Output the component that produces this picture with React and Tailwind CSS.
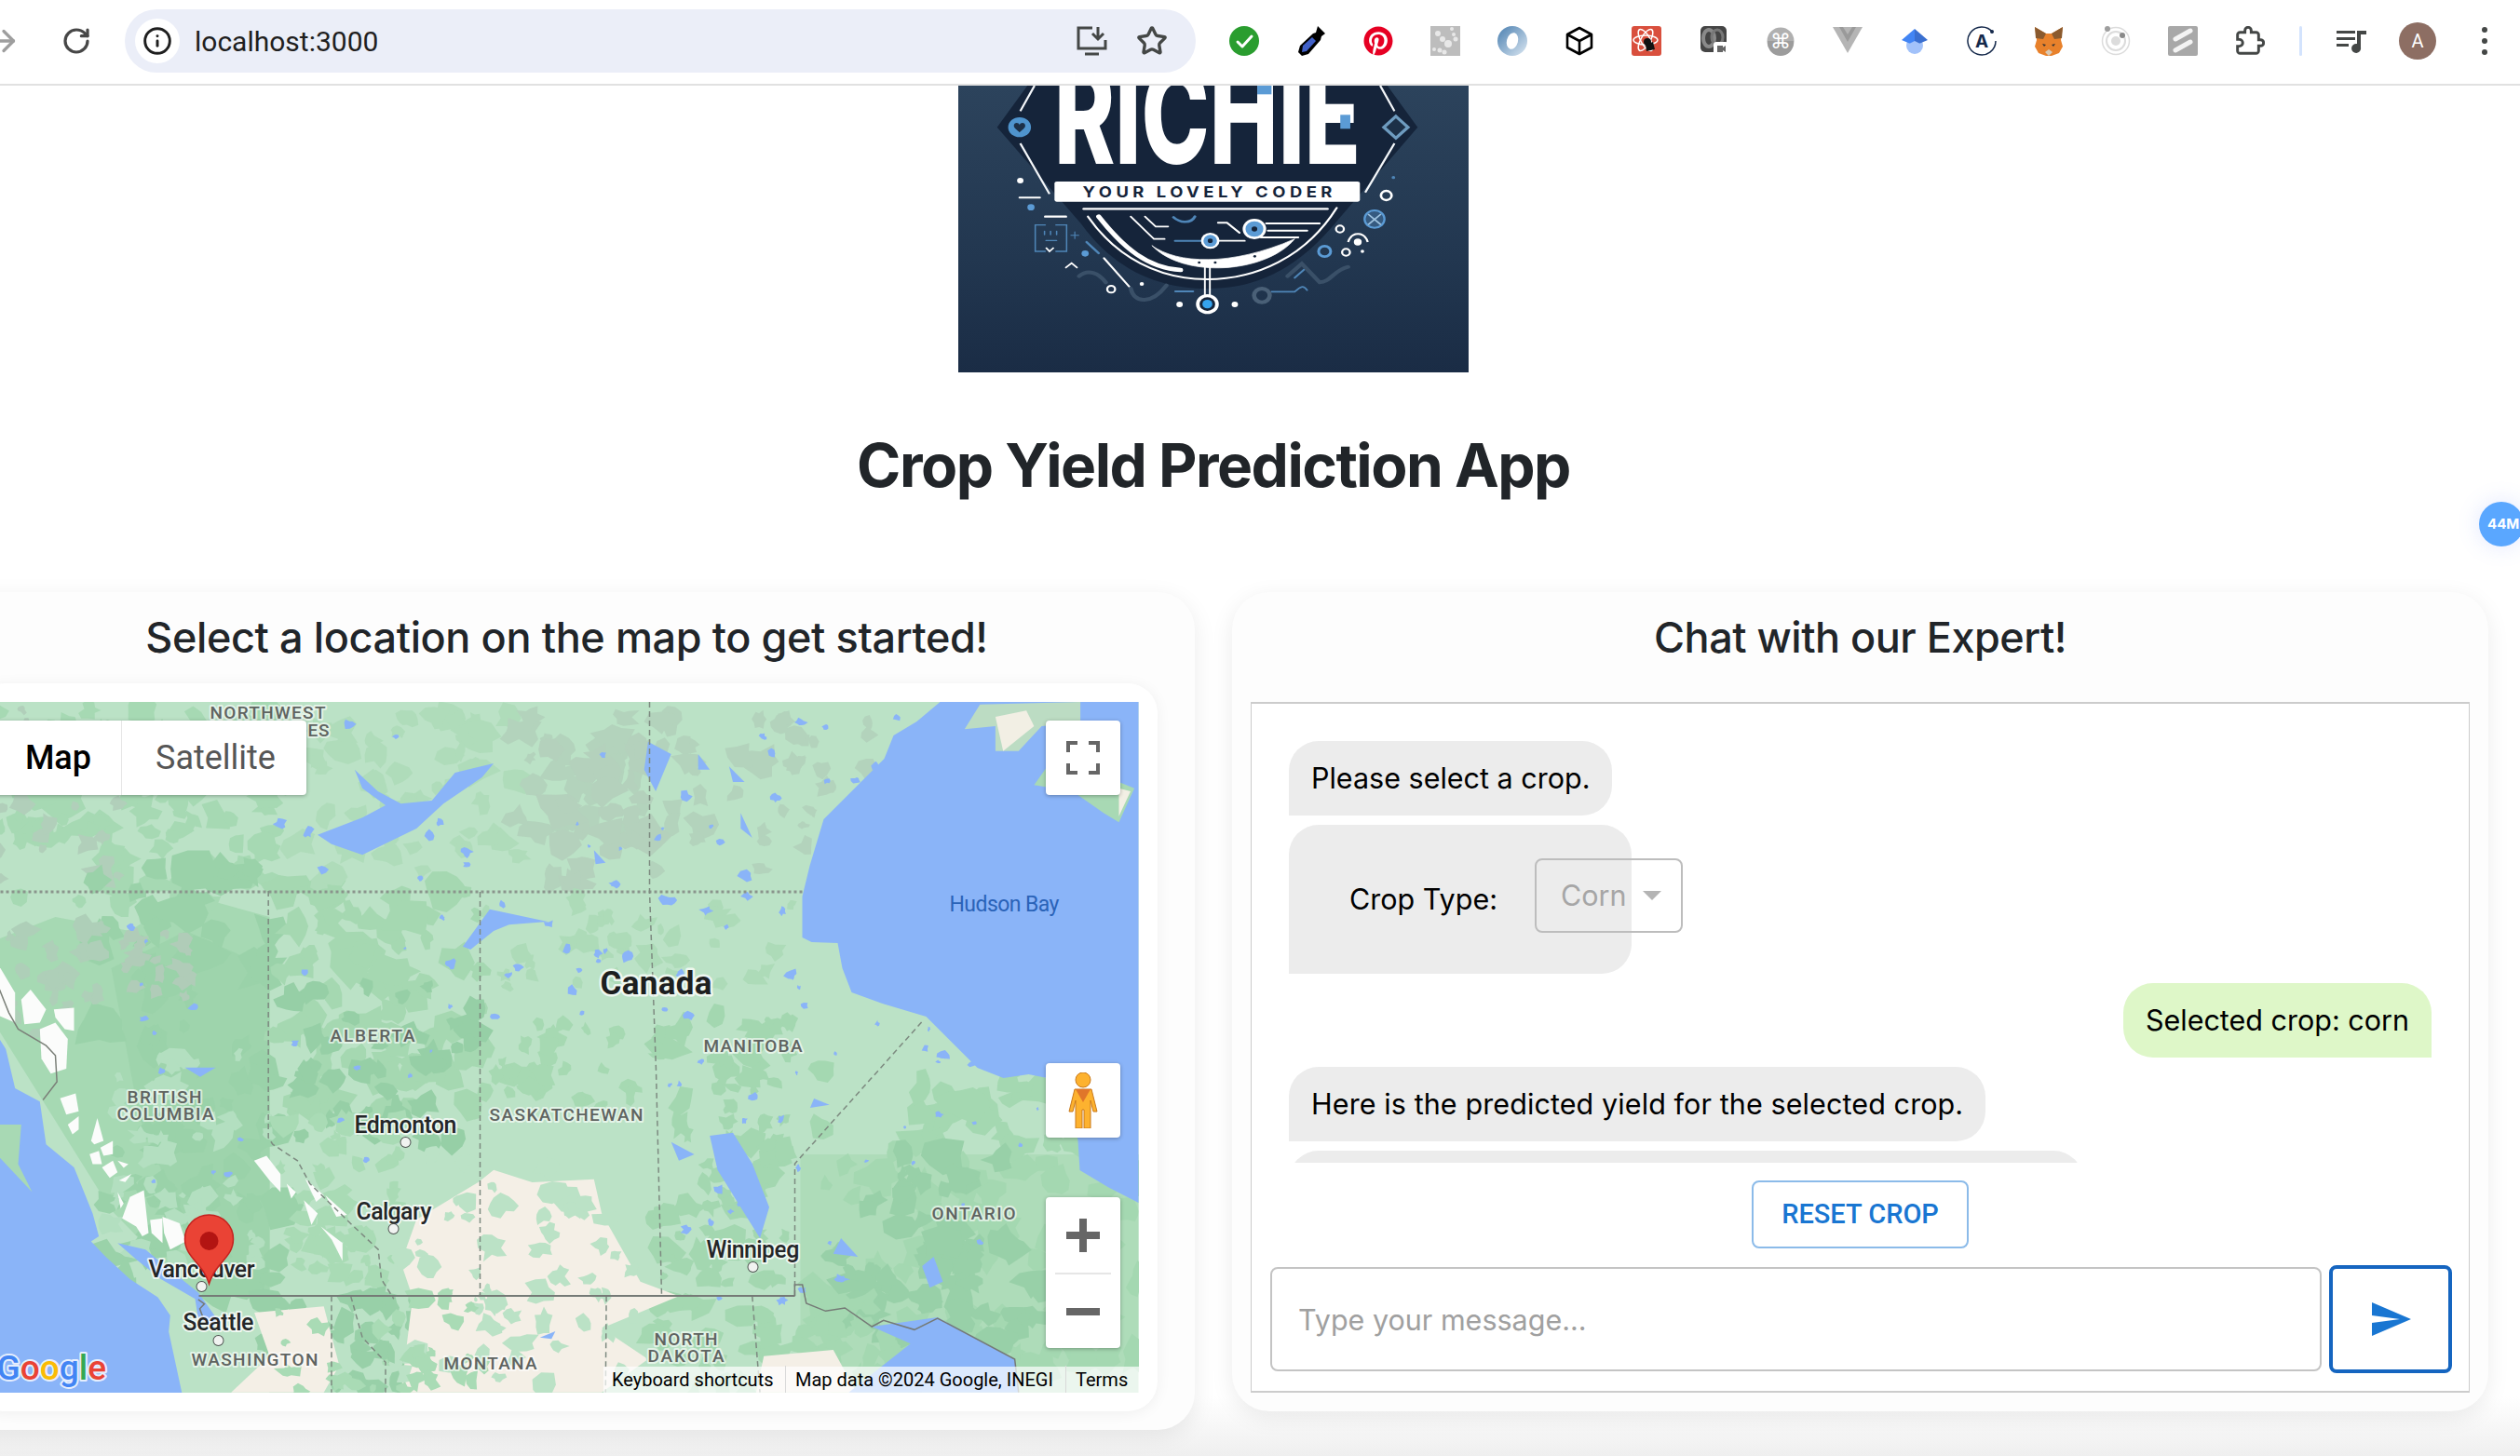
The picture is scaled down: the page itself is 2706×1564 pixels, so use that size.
import { ArrowRight, Info, RotateCw, Star } from "lucide-react";
import { FaPinterest } from "react-icons/fa";

// ── map helpers ─────────────────────────────────────────────
// coordinates below are page pixels, the map svg viewBox starts at the same origin
const toD = (pts) => "M" + pts.map((p) => p.map((n) => n.toFixed(1)).join(" ")).join("L") + "Z";
const z4 = (pts) => pts.map(([x, y]) => [x * 0.829, 630 + y / 3]);
const z5 = (pts) => pts.map(([x, y]) => [x * 0.829, 1090 + y / 3]);
const z12 = (pts) => pts.map(([x, y]) => [x / 3, 950 + y / 2.83]);

function makeRng(seed) {
  let s = seed;
  return () => {
    s = (s * 16807) % 2147483647;
    return (s - 1) / 2147483646;
  };
}

function blob(rng, cx, cy, r, stretch = 1) {
  const pts = [];
  const n = 7 + Math.floor(rng() * 6);
  for (let i = 0; i < n; i++) {
    const a = (i / n) * Math.PI * 2;
    const rr = r * (0.45 + rng() * 0.75);
    pts.push([cx + Math.cos(a) * rr * stretch, cy + Math.sin(a) * rr]);
  }
  return toD(pts);
}

// [x0, y0, x1, y1, count, minR, maxR, fill, seed]
const scatter = [
  [-5, 760, 300, 980, 90, 6, 22, "#a6d9b3", 11],
  [-5, 760, 130, 950, 30, 5, 16, "#b1cfba", 12],
  [100, 930, 300, 1390, 80, 8, 26, "#9ad2a9", 13],
  [0, 990, 110, 1110, 24, 6, 16, "#aecfb8", 14],
  [130, 1000, 210, 1070, 18, 5, 12, "#b0ccb8", 15],
  [110, 1130, 290, 1370, 50, 5, 16, "#b3dfc0", 16],
  [290, 950, 520, 1200, 70, 8, 24, "#a5d8b1", 17],
  [300, 1050, 510, 1230, 36, 6, 18, "#96cfa6", 18],
  [300, 770, 560, 950, 60, 6, 18, "#afdcba", 19],
  [520, 760, 820, 950, 50, 6, 20, "#b3d3bc", 20],
  [590, 800, 700, 950, 24, 10, 24, "#b4d1bc", 21],
  [810, 770, 950, 950, 26, 5, 14, "#b3d3bc", 22],
  [520, 965, 850, 1060, 40, 5, 14, "#addbb8", 23],
  [520, 1100, 700, 1190, 30, 6, 14, "#a6d9b2", 24],
  [700, 1090, 850, 1380, 80, 6, 18, "#a3d7b0", 25],
  [860, 1140, 1223, 1470, 100, 8, 24, "#a4d8b1", 26],
  [900, 1240, 1120, 1440, 60, 8, 22, "#98d0a8", 27],
  [280, 1390, 470, 1496, 50, 6, 16, "#98d0a8", 28],
  [700, 1392, 1000, 1496, 50, 6, 18, "#a4d8b1", 29],
  [300, 1200, 430, 1392, 50, 5, 16, "#a9dbb5", 31],
];

// drawn over the prairie: green breaks and the little lakes
const overlay = [
  [430, 1240, 700, 1490, 60, 4, 16, "#bbe2c6", 30],
  [440, 1392, 520, 1496, 16, 5, 14, "#a9dbb5", 32],
  [300, 1410, 440, 1496, 14, 4, 12, "#a9dbb5", 33],
  [300, 770, 1000, 1100, 70, 2, 7, "#8ab4f8", 34],
  [700, 1100, 1200, 1400, 36, 2, 6, "#8ab4f8", 35],
  [120, 980, 500, 1300, 20, 1.5, 4, "#8ab4f8", 36],
];

const cream = [
  z5([[640, 500], [690, 540], [770, 530], [780, 640], [830, 860], [880, 907], [780, 1010], [840, 1110], [780, 1217], [520, 1217], [535, 910], [520, 800], [540, 660], [620, 540]]),
  z5([[330, 960], [420, 940], [440, 1130], [420, 1217], [300, 1217], [350, 1100]]),
  z5([[990, 1100], [1080, 1080], [1110, 1217], [980, 1217]]),
];

const water = [
  // hudson bay
  [[1223, 754], [1010, 754], [985, 775], [960, 790], [950, 815], [915, 850], [885, 880], [870, 930], [862, 963], [862, 1007], [872, 1012], [900, 1013], [905, 1040], [915, 1066], [948, 1078], [995, 1092], [1025, 1122], [1050, 1147], [1078, 1158], [1105, 1154], [1135, 1160], [1150, 1188], [1158, 1225], [1160, 1257], [1190, 1275], [1223, 1292]],
  // pacific
  z12([[-20, 440], [20, 500], [50, 620], [130, 660], [150, 790], [240, 860], [300, 1000], [320, 1070], [295, 1085], [340, 1130], [420, 1200], [510, 1255], [550, 1310], [545, 1360], [590, 1557], [-20, 1557]]),
  // georgia strait and puget sound
  z12([[380, 1090], [470, 1110], [560, 1180], [640, 1240], [700, 1320], [690, 1345], [640, 1320], [630, 1260], [520, 1200], [440, 1140]]),
  // great slave
  z4([[460, 590], [490, 660], [520, 700], [560, 690], [590, 600], [640, 570], [625, 615], [575, 700], [540, 780], [470, 865], [430, 830], [412, 800], [470, 745], [500, 705], [470, 650]]),
  // athabasca
  z4([[600, 1160], [635, 1040], [710, 1080], [660, 1090], [640, 1110], [610, 1170]]),
  // winnipeg
  z5([[920, 390], [950, 380], [975, 480], [997, 620], [985, 720], [960, 620], [930, 500]]),
  // superior
  z5([[1130, 1005], [1215, 975], [1315, 1110], [1320, 1217], [1100, 1217], [1180, 1060]]),
  // smaller lakes
  z4([[840, 500], [870, 540], [850, 660], [835, 590]]),
  z4([[905, 540], [920, 590], [905, 590]]),
  z4([[945, 580], [965, 630], [950, 630]]),
  z4([[770, 850], [785, 890], [772, 895]]),
  z4([[960, 730], [975, 810], [960, 780]]),
  z5([[1210, 780], [1222, 860], [1205, 880], [1195, 810]]),
  z5([[1080, 770], [1112, 780], [1090, 720]]),
  z5([[700, 1040], [720, 1020], [715, 1045]]),
  z5([[1055, 270], [1075, 290], [1050, 300]]),
  z5([[870, 410], [900, 450], [880, 470]]),
  z5([[240, 170], [280, 170], [260, 200]]),
  z4([[1340, 620], [1350, 640], [1338, 650]]),
];

const islands = [
  z4([[1250, 460], [1270, 380], [1400, 372], [1400, 440], [1350, 450], [1320, 530], [1290, 530], [1290, 450]]),
  z4([[1340, 640], [1360, 570], [1420, 600], [1470, 650], [1450, 760], [1430, 730], [1390, 660]]),
  z12([[0, 730], [70, 730], [60, 850], [105, 935], [50, 880], [0, 830]]),
];

const snow = [
  z12([[0, 250], [50, 330], [50, 420], [0, 400]]),
  z12([[70, 350], [100, 320], [150, 380], [130, 420], [80, 425]]),
  z12([[130, 440], [180, 420], [220, 470], [215, 560], [165, 575], [135, 530]]),
  z12([[175, 380], [240, 375], [240, 445], [210, 440], [180, 405]]),
  z12([[195, 650], [245, 635], [255, 690], [215, 700]]),
  z12([[220, 730], [255, 705], [255, 745], [235, 760]]),
  z12([[295, 780], [315, 710], [335, 780], [305, 790]]),
  z12([[325, 800], [365, 780], [365, 820], [335, 825]]),
  z12([[290, 820], [320, 810], [330, 850], [300, 850]]),
  z12([[330, 860], [365, 840], [380, 875], [355, 892]]),
  z12([[380, 840], [415, 850], [400, 862]]),
  z12([[385, 900], [425, 880], [405, 905]]),
  z12([[380, 935], [400, 970], [390, 985]]),
  z12([[420, 950], [465, 930], [480, 1060], [460, 1070], [440, 1040], [395, 1015]]),
  z12([[485, 1020], [525, 1015], [525, 1090], [490, 1060]]),
  z12([[525, 1010], [580, 1030], [600, 1085], [550, 1110], [530, 1060]]),
  z12([[820, 840], [860, 825], [905, 880], [905, 935], [870, 900]]),
  z12([[925, 910], [955, 935], [940, 955]]),
  z12([[980, 960], [1025, 1000], [1005, 1035]]),
  z12([[985, 895], [1045, 945], [1020, 965]]),
  z12([[1050, 945], [1120, 1005], [1085, 1010]]),
  z12([[1035, 1040], [1105, 1090], [1105, 1145], [1070, 1080]]),
];

const dashed = [
  z12([[866, 20], [866, 770], [880, 790], [960, 840], [1000, 910], [1130, 1030], [1220, 1110], [1230, 1200], [1270, 1260]]),
  [[516, 958], [516, 1392]],
  [[698, 754], [698, 958], [705, 1150], [711, 1392]],
  [[854, 1392], [854, 1250], [991, 1097]],
  z5([[430, 907], [430, 1217]]),
  z5([[455, 907], [470, 1040], [500, 1120], [500, 1217]]),
  z5([[786, 907], [785, 1217]]),
  z5([[975, 907], [985, 1217]]),
];

const places = [
  ["NORTHWEST", 226, 350, 765],
  ["ES", 331, 354, 784],
  ["ALBERTA", 355, 446, 1112],
  ["MANITOBA", 756, 862, 1123],
  ["BRITISH", 137, 217, 1178],
  ["COLUMBIA", 126, 230, 1196],
  ["SASKATCHEWAN", 526, 691, 1197],
  ["ONTARIO", 1001, 1091, 1303],
  ["WASHINGTON", 206, 342, 1460],
  ["MONTANA", 477, 577, 1464],
  ["NORTH", 703, 771, 1438],
  ["DAKOTA", 696, 778, 1456],
];

const cities = [
  ["Edmonton", 381, 491, 1208, 436, 1227],
  ["Calgary", 383, 464, 1301, 423, 1320],
  ["Winnipeg", 759, 859, 1342, 809, 1361],
  ["Vancouver", 160, 274, 1363, 217, 1382],
  ["Seattle", 197, 273, 1420, 235, 1440],
];

function scatterPaths(list) {
  return list.flatMap(([x0, y0, x1, y1, count, rMin, rMax, fill, seed]) => {
    const rng = makeRng(seed * 7919);
    return Array.from({ length: count }, (_, i) => (
      <path
        key={`${seed}-${i}`}
        d={blob(rng, x0 + rng() * (x1 - x0), y0 + rng() * (y1 - y0), rMin + rng() * (rMax - rMin), 0.7 + rng() * 0.8)}
        fill={fill}
      />
    ));
  });
}

function MapCanvas() {
  return (
    <svg viewBox="-5 754 1228 742" className="block h-full w-full">
      <rect x="-5" y="754" width="1228" height="742" fill="#bbe2c6" />
      <path d="M-5 1010L60 985L140 1000L200 960L290 985V1392H210L120 1300L-5 1100Z" fill="#a6d9b3" />
      <path d="M120 1040L200 1000L290 1040V1392H230L150 1200Z" fill="#9ed4ac" />
      <path d="M860 1240H1223V1470H860Z" fill="#aedcb9" />
      {scatterPaths(scatter)}
      {cream.map((p, i) => (
        <path key={i} d={toD(p)} fill="#f4efe6" />
      ))}
      {scatterPaths(overlay)}
      {water.map((p, i) => (
        <path key={i} d={toD(p)} fill="#8ab4f8" />
      ))}
      {islands.map((p, i) => (
        <path key={i} d={toD(p)} fill={i === 0 ? "#bcdcc3" : "#a8d9b4"} />
      ))}
      <path d={toD(z4([[1290, 420], [1330, 400], [1340, 450], [1300, 530]]))} fill="#f2efe4" />
      <path d={toD(z4([[1450, 650], [1465, 660], [1450, 740]]))} fill="#f2efe4" />
      {snow.map((p, i) => (
        <path key={i} d={toD(p)} fill="#fbfcfb" />
      ))}

      {/* borders */}
      <path d="M-5 958H862" stroke="#8a948c" strokeWidth="3" strokeDasharray="3 3" fill="none" />
      {dashed.map((p, i) => (
        <polyline key={i} points={p.map((q) => q.join(",")).join(" ")} fill="none" stroke="#7d8a80" strokeWidth="1.5" strokeDasharray="6 4" />
      ))}
      <polyline
        points={z12([[0, 320], [30, 390], [60, 440], [150, 490], [180, 520], [185, 600], [140, 655]]).map((q) => q.join(",")).join(" ")}
        fill="none"
        stroke="#7b8079"
        strokeWidth="1.5"
      />
      <path d="M214 1392H854" stroke="#757a76" strokeWidth="2" fill="none" />
      <polyline
        points={z5([[1030, 907], [1030, 870], [1040, 870], [1045, 930], [1070, 955], [1095, 945], [1130, 1005], [1145, 985], [1185, 1015], [1215, 978], [1315, 1110], [1320, 1217]]).map((q) => q.join(",")).join(" ")}
        fill="none"
        stroke="#757a76"
        strokeWidth="1.5"
      />
      <polyline points={z12([[640, 1262], [660, 1275], [645, 1290], [655, 1315]]).map((q) => q.join(",")).join(" ")} fill="none" stroke="#757a76" strokeWidth="1.5" />

      {/* labels */}
      <g style={{ fontFamily: "Roboto, sans-serif" }} textAnchor="start" paintOrder="stroke" strokeLinejoin="round">
        {places.map(([name, x0, x1, y]) => (
          <text key={name + x0} x={x0} y={y + 7} fontSize="19" fontWeight="500" fill="#5f6461" stroke="#ffffff" strokeOpacity="0.6" strokeWidth="4" textLength={x1 - x0} lengthAdjust="spacing">
            {name}
          </text>
        ))}
        <text x="1020" y="979" fontSize="23" fill="#2a63b8" textLength="118">Hudson Bay</text>
        <text x="645" y="1068" fontSize="35" fontWeight="700" fill="#1d1f20" stroke="#ffffff" strokeOpacity="0.75" strokeWidth="5" textLength="120">Canada</text>
        {cities.map(([name, x0, x1, y, dx, dy]) => (
          <g key={name}>
            <text x={x0} y={y + 9} fontSize="25" fontWeight="500" fill="#242628" stroke="#ffffff" strokeOpacity="0.75" strokeWidth="4" textLength={x1 - x0}>
              {name}
            </text>
            <circle cx={dx} cy={dy} r="5" fill="#f1f3f1" stroke="#4e5250" strokeWidth="2" />
          </g>
        ))}
        <text x="-3" y="1482" fontSize="37" fontWeight="500" stroke="#ffffff" strokeOpacity="0.8" strokeWidth="4" style={{ fontFamily: "Roboto, sans-serif" }}>
          <tspan fill="#4285f4">G</tspan>
          <tspan fill="#ea4335">o</tspan>
          <tspan fill="#fbbc05">o</tspan>
          <tspan fill="#4285f4">g</tspan>
          <tspan fill="#34a853">l</tspan>
          <tspan fill="#ea4335">e</tspan>
        </text>
      </g>

      {/* pin */}
      <path d="M225 1305c-14.500 0-26 11.500-26 26 0 20 20 26 26 48 6-22 26-28 26-48 0-14.500-11.500-26-26-26z" fill="#ea4335" stroke="#c5221f" strokeWidth="1.500" />
      <ellipse cx="225" cy="1333" rx="10" ry="10" fill="#b31412" />
    </svg>
  );
}

function MapControls() {
  return (
    <>
      <div className="absolute left-0 top-5 flex h-20 w-[335px] rounded-r bg-white text-[36px] shadow-[0_1px_4px_rgba(0,0,0,0.3)] [font-family:Roboto,sans-serif]">
        <div className="flex w-[137px] items-center justify-end border-r border-[#e6e6e6] pr-[32px] font-medium text-black">Map</div>
        <div className="flex flex-1 items-center pl-9 text-[#565656]">Satellite</div>
      </div>

      <div className="absolute right-5 top-5 flex h-20 w-20 items-center justify-center rounded bg-white shadow-[0_1px_4px_rgba(0,0,0,0.3)]">
        <svg width="36" height="36" viewBox="0 0 36 36" fill="none" stroke="#666666" strokeWidth="4">
          <path d="M2 12V2H12M24 2H34V12M34 24V34H24M12 34H2V24" />
        </svg>
      </div>

      <div className="absolute right-5 top-[388px] flex h-20 w-20 items-center justify-center rounded bg-white shadow-[0_1px_4px_rgba(0,0,0,0.3)]">
        <svg width="36" height="60" viewBox="0 0 36 60">
          <circle cx="18" cy="8" r="8" fill="#fdb22f" stroke="#c9791b" strokeWidth="1" />
          <path d="M9 18H27L33 42H29L26 30V60H19V40H17V60H10V30L7 42H3Z" fill="#fdb22f" stroke="#c9791b" strokeWidth="1" />
          <path d="M10 18H26L18 32Z" fill="#e0762a" />
        </svg>
      </div>

      <div className="absolute right-5 top-[532px] flex h-[162px] w-20 flex-col items-center rounded bg-white shadow-[0_1px_4px_rgba(0,0,0,0.3)]">
        <div className="flex h-[81px] w-full items-center justify-center">
          <svg width="36" height="36" viewBox="0 0 36 36" fill="#666666">
            <path d="M14 0H22V14H36V22H22V36H14V22H0V14H14Z" />
          </svg>
        </div>
        <div className="h-0.5 w-[60px] bg-[#e6e6e6]" />
        <div className="flex flex-1 items-center justify-center">
          <div className="h-2 w-9 bg-[#666666]" />
        </div>
      </div>

      <div className="absolute bottom-0 right-0 flex h-7 w-[575px] items-center bg-white/70 text-[20px] text-black [font-family:Roboto,sans-serif]">
        <span className="w-[195px] shrink-0 pl-[9px]">Keyboard shortcuts</span>
        <span className="w-[301px] shrink-0 border-l border-[#d9d9d9] pl-[10px]">Map data ©2024 Google, INEGI</span>
        <span className="border-l border-[#d9d9d9] pl-[10px]">Terms</span>
      </div>
    </>
  );
}

// ── logo ────────────────────────────────────────────────────
function Logo() {
  return (
    <div className="mx-auto h-[308px] w-[548px] shrink-0 overflow-hidden">
      <svg viewBox="76 36 1432 924" preserveAspectRatio="none" className="block h-full w-full">
        <defs>
          <linearGradient id="logoBg" x1="0" y1="0" x2="0" y2="1">
            <stop offset="0" stopColor="#2c435c" />
            <stop offset="0.6" stopColor="#223750" />
            <stop offset="1" stopColor="#1a2c45" />
          </linearGradient>
        </defs>
        <rect x="76" y="36" width="1432" height="924" fill="url(#logoBg)" />
        <path d="M270 36H1280L1365 170L1140 470C1020 640 900 690 775 690C650 690 520 640 420 480L185 170Z" fill="#15243a" />
        <circle cx="248" cy="170" r="32" fill="#4f94cd" />
        <path d="M232 165c0-12 14-12 16-2 2-10 16-10 16 2 0 8-10 14-16 22-6-8-16-14-16-22z" fill="#1c3047" />
        <path d="M1304 135L1338 170L1304 205L1270 170Z" fill="#1c3047" stroke="#6e9cc0" strokeWidth="9" />
        <path d="M290 36L250 118M250 222L332 385M1260 36L1300 118M1300 222L1218 380" stroke="#f4f7fa" strokeWidth="6" fill="none" />

        <text x="345" y="288" fontSize="440" fontWeight="800" fill="#ffffff" textLength="860" lengthAdjust="spacingAndGlyphs" style={{ fontFamily: "Inter, sans-serif" }}>
          RICHIE
        </text>
        <rect x="915" y="36" width="40" height="28" fill="#5b9bd5" />
        <rect x="1148" y="130" width="28" height="45" fill="#5b9bd5" />

        <rect x="346" y="345" width="857" height="65" rx="7" fill="#ffffff" />
        <text x="425" y="397" fontSize="48" fontWeight="700" fill="#15243a" textLength="700" lengthAdjust="spacing" style={{ fontFamily: "Inter, sans-serif" }}>
          YOUR LOVELY  CODER
        </text>

        <g fill="none" stroke="#ffffff" strokeLinecap="round">
          <path d="M428 433H1112" strokeWidth="7" />
          <path d="M440 458C520 590 640 660 775 660C910 660 1050 590 1138 430" strokeWidth="6" />
          <path d="M470 458C540 560 610 625 700 630" strokeWidth="14" />
          <path d="M620 552C690 610 840 620 1020 530C940 640 710 660 620 552Z" fill="#ffffff" strokeWidth="2" />
          <path d="M560 458L625 530H655M600 458L630 490H665" strokeWidth="5" />
          <path d="M805 478H830L865 510M940 480H1090M945 503H1055M925 525H1030" strokeWidth="6" />
          <path d="M800 536H880" strokeWidth="5" />
          <path d="M768 600V710M782 600V710" strokeWidth="5" />
          <path d="M485 592L556 684" strokeWidth="6" />
          <path d="M248 397H305" strokeWidth="6" />
          <path d="M320 458H378" strokeWidth="7" />
          <path d="M378 622L394 608L409 622" strokeWidth="5" />
        </g>
        <g fill="none" stroke="#4f86b8" strokeLinecap="round">
          <path d="M684 536H760" strokeWidth="6" />
          <path d="M685 699H735" strokeWidth="6" />
          <path d="M436 540L470 576" strokeWidth="7" />
          <path d="M955 700H1020C1040 680 1045 680 1055 695" strokeWidth="5" />
          <path d="M1020 655L1050 625L1090 668" strokeWidth="6" />
          <path d="M680 460C700 480 730 480 740 458" strokeWidth="8" />
          <path d="M320 485H292V570H320M350 570H380V485H350" strokeWidth="4" />
          <path d="M392 518H414M403 507V529" strokeWidth="3" />
          <path d="M318 505V516M335 505V516M352 505V516M322 535H352" strokeWidth="4" />
        </g>
        <path d="M322 558L332 570L344 558" stroke="#ffffff" strokeWidth="5" fill="none" />
        <path d="M415 650C440 625 470 640 490 670M560 690C570 740 620 740 660 680M1000 650L1040 610L1090 670C1120 670 1130 630 1170 620" stroke="#3a5068" strokeWidth="12" fill="none" strokeLinecap="round" />
        <g>
          <circle cx="783" cy="536" r="26" fill="#ffffff" />
          <circle cx="783" cy="536" r="19" fill="#5b9bd5" />
          <circle cx="783" cy="536" r="7" fill="#15243a" />
          <circle cx="907" cy="498" r="33" fill="#ffffff" />
          <circle cx="907" cy="498" r="25" fill="#5b9bd5" />
          <circle cx="907" cy="498" r="8" fill="#15243a" />
          <circle cx="775" cy="740" r="32" fill="#ffffff" />
          <circle cx="775" cy="740" r="22" fill="#15243a" />
          <circle cx="775" cy="740" r="14" fill="#35a3ee" />
          <circle cx="697" cy="741" r="9" fill="#ffffff" />
          <circle cx="852" cy="741" r="9" fill="#ffffff" />
          <circle cx="505" cy="692" r="11" fill="none" stroke="#ffffff" strokeWidth="6" />
          <circle cx="591" cy="675" r="6" fill="#ffffff" />
          <circle cx="250" cy="342" r="9" fill="#ffffff" />
          <circle cx="280" cy="428" r="10" fill="#5b9bd5" />
          <circle cx="432" cy="577" r="10" fill="#5b9bd5" />
          <circle cx="1277" cy="390" r="15" fill="none" stroke="#ffffff" strokeWidth="7" />
          <circle cx="1297" cy="332" r="5" fill="#4f86b8" />
          <circle cx="1244" cy="466" r="28" fill="#355a80" stroke="#5b9bd5" strokeWidth="6" />
          <path d="M1226 450L1262 484M1262 450L1226 484" stroke="#9fc3e0" strokeWidth="5" />
          <circle cx="1147" cy="498" r="11" fill="none" stroke="#ffffff" strokeWidth="6" />
          <path d="M1170 540C1180 505 1215 505 1225 540" fill="none" stroke="#ffffff" strokeWidth="6" />
          <circle cx="1197" cy="540" r="11" fill="#ffffff" />
          <circle cx="1104" cy="570" r="17" fill="none" stroke="#5b9bd5" strokeWidth="8" />
          <circle cx="1164" cy="573" r="11" fill="none" stroke="#ffffff" strokeWidth="6" />
          <circle cx="1210" cy="570" r="5" fill="#ffffff" />
          <circle cx="928" cy="712" r="22" fill="none" stroke="#4a6077" strokeWidth="12" />
          <circle cx="752" cy="606" r="4" fill="#15243a" />
          <circle cx="797" cy="606" r="4" fill="#15243a" />
          <circle cx="908" cy="586" r="4" fill="#15243a" />
        </g>
      </svg>
    </div>
  );
}

// ── browser chrome ──────────────────────────────────────────
const box = "h-8 w-8 shrink-0";

const extensions = [
  <svg key="check" viewBox="0 0 32 32" className={box}><circle cx="16" cy="16" r="16" fill="#2a9d2f" /><path d="M9 17l5 5 10-11" fill="none" stroke="#fff" strokeWidth="3" strokeLinecap="round" strokeLinejoin="round" /></svg>,
  <svg key="dropper" viewBox="0 0 32 32" className={box}><path d="M23 0l8 8-4 3-1 4-13 15-7 2-4-4 2-7L18 8l3-1z" fill="#000" /><path d="M7 21l10-9 4 4-10 11-5 1z" fill="#4060c8" /></svg>,
  <FaPinterest key="pin" className={box} color="#e60023" />,
  <svg key="dots" viewBox="0 0 32 32" className={box}><rect width="32" height="32" fill="#bdbdbd" /><g fill="#e8e8e8"><circle cx="23" cy="3" r="2" /><circle cx="25" cy="9" r="2" /><circle cx="8" cy="8" r="3" /><circle cx="13" cy="14" r="3" /><circle cx="19" cy="19" r="4" /><circle cx="27" cy="14" r="2.500" /><circle cx="4" cy="25" r="2" /><circle cx="10" cy="26" r="2.500" /><circle cx="15" cy="28" r="2.500" /></g></svg>,
  <svg key="ring" viewBox="0 0 32 32" className={box}><defs><linearGradient id="ringG" x1="0" y1="0" x2="1" y2="1"><stop offset="0" stopColor="#4a7fb0" /><stop offset="1" stopColor="#dbe7f2" /></linearGradient></defs><circle cx="16" cy="16" r="16" fill="url(#ringG)" /><ellipse cx="16" cy="16" rx="6" ry="9" fill="#fff" transform="rotate(15 16 16)" /></svg>,
  <svg key="cube" viewBox="0 0 32 32" className={box}><path d="M16 2l13 7v14l-13 7-13-7V9zM3 9l13 7 13-7M16 16v14" fill="none" stroke="#000" strokeWidth="2.600" strokeLinejoin="round" /></svg>,
  <svg key="bug" viewBox="0 0 32 32" className={box}><rect width="32" height="32" rx="3" fill="#d94f3d" /><g fill="none" stroke="#fff" strokeWidth="1.500"><ellipse cx="15" cy="15" rx="13" ry="5" /><ellipse cx="15" cy="15" rx="13" ry="5" transform="rotate(60 15 15)" /><ellipse cx="15" cy="15" rx="13" ry="5" transform="rotate(120 15 15)" /></g><circle cx="17" cy="17" r="4" fill="#111" /><path d="M15 20l8-3 2 8-9 2z" fill="#111" /></svg>,
  <svg key="cam" viewBox="0 0 32 32" className={box}><rect x="2" width="28" height="28" rx="5" fill="#454545" /><ellipse cx="11" cy="13" rx="6" ry="9" fill="none" stroke="#8a8a8a" strokeWidth="4" /><ellipse cx="20" cy="12" rx="6" ry="8" fill="none" stroke="#777" strokeWidth="3" /><rect x="16" y="17" width="16" height="15" rx="3" fill="#fff" /><path d="M20 21h6v2l3-2v7l-3-2v2h-6z" fill="#666" /></svg>,
  <svg key="cmd" viewBox="0 0 32 32" className={box}><circle cx="16" cy="16" r="14.500" fill="#b0b0b0" /><path d="M2 16h28v2a14 14 0 0 1-28 0z" fill="#9c9c9c" /><text x="16" y="24" textAnchor="middle" fontSize="22" fill="#fff" style={{ fontFamily: "'DejaVu Sans', sans-serif" }}>⌘</text></svg>,
  <svg key="vue" viewBox="0 0 32 32" className={box}><path d="M0 1h32L16 29z" fill="#b5b5b5" /><path d="M7 1h18L16 17z" fill="#9a9a9a" /><path d="M11 1h10l-5 8z" fill="#b5b5b5" /></svg>,
  <svg key="grad" viewBox="0 0 32 32" className={box}><circle cx="16" cy="21" r="9" fill="#a2c2fa" /><path d="M2 15L16 3v18z" fill="#4285f4" /><path d="M30 15L16 3v18z" fill="#3a6fd0" /><path d="M8 20a8 8 0 0 0 16 0l-8-4z" fill="#a2c2fa" /></svg>,
  <svg key="apollo" viewBox="0 0 32 32" className={box}><path d="M28 7A15 15 0 1 0 31 16" fill="none" stroke="#15294b" strokeWidth="1.500" /><circle cx="27" cy="6" r="2" fill="#15294b" /><text x="16" y="23" textAnchor="middle" fontSize="19" fontWeight="700" fill="#15294b" style={{ fontFamily: "Inter, sans-serif" }}>A</text></svg>,
  <svg key="fox" viewBox="0 0 32 32" className={box}><path d="M1 1l12 7h6l12-7-2 14 2 7-4 7-8 3h-6l-8-3-4-7 2-7z" fill="#e8812b" /><path d="M1 1l12 7-3 6-8-1zM31 1l-12 7 3 6 8-1z" fill="#8a5a2e" /><path d="M13 28h6l-3 3z" fill="#222" /><path d="M9 19l4 1-2 2zM23 19l-4 1 2 2z" fill="#333" /><path d="M12 28l4 4 4-4-4-3z" fill="#d8c9b5" /></svg>,
  <svg key="gring" viewBox="0 0 32 32" className={box}><g fill="none" stroke="#dcdcdc" strokeWidth="1.500"><circle cx="16" cy="16" r="14.500" /><circle cx="16" cy="16" r="10" strokeWidth="2" /></g><circle cx="16" cy="16" r="5" fill="#dcdcdc" /><circle cx="7" cy="3" r="3" fill="#9e9e9e" /><circle cx="23" cy="10" r="3" fill="#8a8a8a" /></svg>,
  <svg key="slash" viewBox="0 0 32 32" className={box}><rect width="32" height="32" rx="2" fill="#a8a8a8" /><path d="M8 14L24 5M8 26L24 17" stroke="#f4f4f4" strokeWidth="5" strokeLinecap="round" /></svg>,
  <svg key="puzzle" viewBox="0 0 24 24" className={box} fill="none" stroke="#444746" strokeWidth="2.200"><path d="M20.500 11H19V7c0-1.100-.9-2-2-2h-4V3.500C13 2.120 11.880 1 10.500 1S8 2.120 8 3.500V5H4c-1.100 0-1.990.9-1.990 2v3.800H3.500c1.490 0 2.700 1.210 2.700 2.700s-1.210 2.700-2.700 2.700H2V20c0 1.100.9 2 2 2h13c1.100 0 2-.9 2-2v-4h1.500c1.380 0 2.500-1.120 2.500-2.500S21.880 11 20.500 11z" /></svg>,
];

function BrowserBar() {
  return (
    <div className="flex h-[92px] shrink-0 items-center overflow-hidden border-b-2 border-[#e1e1e1] bg-white pb-0.5">
      <ArrowRight className="ml-[-14px] h-9 w-9 shrink-0 text-[#9e9e9e]" strokeWidth={2.2} />
      <RotateCw className="ml-[44px] h-8 w-8 shrink-0 text-[#474747]" strokeWidth={2.4} />
      <div className="ml-[36px] flex h-[68px] w-[1150px] shrink-0 items-center rounded-full bg-[#ebeef8] pl-[11px] pr-[30px]">
        <div className="flex h-12 w-12 items-center justify-center rounded-full bg-white">
          <Info className="h-8 w-8 text-[#1f1f1f]" strokeWidth={2.2} />
        </div>
        <span className="ml-4 text-[30px] text-[#1f1f1f] [font-family:Roboto,sans-serif]">localhost:3000</span>
        <div className="ml-auto flex items-center gap-[31px]">
          <svg width="34" height="34" viewBox="0 0 34 34" fill="none" stroke="#444746" strokeWidth="3">
            <path d="M18 3H3V25H32V16M10 31H25M24 2V14M18 9L24 15L30 9" />
          </svg>
          <Star className="h-[34px] w-[34px] text-[#444746]" strokeWidth={2.4} />
        </div>
      </div>
      <div className="ml-9 flex shrink-0 items-center gap-10">{extensions}</div>
      <div className="ml-[37px] h-8 w-[3px] shrink-0 rounded bg-[#d3e3fd]" />
      <svg viewBox="0 0 32 26" className="ml-[37px] h-[26px] w-8 shrink-0" fill="#444746">
        <path d="M0 2H20V5H0ZM0 9H20V12H0ZM0 16H13V19H0ZM22 2H32V6H26V20A5 5 0 1 1 22 16Z" />
      </svg>
      <div className="ml-[35px] flex h-10 w-10 shrink-0 items-center justify-center rounded-full bg-[#8d6e63] text-[20px] text-white [font-family:Roboto,sans-serif]">A</div>
      <div className="ml-[49px] flex shrink-0 flex-col gap-[6px]">
        <span className="h-[6px] w-[6px] rounded-full bg-[#444746]" />
        <span className="h-[6px] w-[6px] rounded-full bg-[#444746]" />
        <span className="h-[6px] w-[6px] rounded-full bg-[#444746]" />
      </div>
    </div>
  );
}

// ── chat ────────────────────────────────────────────────────
function ChatPanel() {
  return (
    <div className="flex h-[880px] w-[1349px] shrink-0 flex-col rounded-[40px] bg-[#fdfdfd] px-5 pb-5 shadow-[0_6px_24px_rgba(0,0,0,0.08)]">
      <h2 className="flex h-[118px] shrink-0 items-center justify-center pb-5 text-[45px] font-medium tracking-[-0.5px] text-[#212529]">Chat with our Expert!</h2>
      <div className="flex min-h-0 flex-1 flex-col border-x border-y-2 border-[#cccccc] bg-white">
        <div className="flex h-[493px] shrink-0 flex-col gap-2.5 overflow-hidden px-10 pt-10 text-[30.5px] text-black">
          <div className="flex h-20 w-fit shrink-0 items-center rounded-[32px] rounded-bl-none bg-[#ececec] px-6">Please select a crop.</div>
          <div className="flex h-40 w-[368px] shrink-0 items-center rounded-[32px] rounded-bl-none bg-[#ececec] pl-[65px]">
            <span className="w-[199px] shrink-0">Crop Type:</span>
            <div className="mb-2 flex h-20 w-[159px] shrink-0 items-center rounded-lg border-2 border-[#bdbdbd] pl-[26px] text-[#a6a6a6]">
              Corn
              <span className="ml-[17px] h-0 w-0 border-x-[10px] border-t-[10px] border-x-transparent border-t-[#b4b4b4]" />
            </div>
          </div>
          <div className="flex h-20 w-fit shrink-0 items-center self-end rounded-[32px] rounded-br-none bg-[#def7c8] px-6">Selected crop: corn</div>
          <div className="flex h-20 w-fit shrink-0 items-center rounded-[32px] rounded-bl-none bg-[#ececec] px-6 tracking-[0.1px]">Here is the predicted yield for the selected crop.</div>
          <div className="h-20 w-[853px] shrink-0 rounded-[32px] rounded-bl-none bg-[#ececec]" />
        </div>
        <div className="flex justify-center pt-[19px]">
          <button className="h-[73px] w-[233px] rounded-lg border-2 border-[#8cbbe9] bg-white text-[29px] font-medium uppercase text-[#1976d2] [font-family:Roboto,sans-serif]">Reset crop</button>
        </div>
        <div className="mt-[18px] flex items-center gap-2 pl-5 pr-[18px]">
          <input
            placeholder="Type your message..."
            readOnly
            className="h-28 min-w-0 flex-1 rounded-lg border-2 border-[#c4c4c4] bg-white pl-7 text-[30.5px] outline-none placeholder:text-[#a0a0a0]"
          />
          <button className="flex h-[116px] w-[132px] shrink-0 items-center justify-center rounded-lg border-4 border-[#1565c0] bg-white">
            <svg width="48" height="48" viewBox="0 0 24 24" fill="#1976d2">
              <path d="M2.010 21 23 12 2.010 3 2 10l15 2-15 2z" />
            </svg>
          </button>
        </div>
      </div>
    </div>
  );
}

function MapPanel() {
  return (
    <div className="flex h-[900px] w-[1349px] shrink-0 flex-col rounded-[40px] bg-[#fdfdfd] px-10 pb-5 shadow-[0_6px_24px_rgba(0,0,0,0.08)]">
      <h2 className="flex h-[98px] shrink-0 items-center justify-center text-[45px] font-medium tracking-[-0.4px] text-[#212529]">Select a location on the map to get started!</h2>
      <div className="min-h-0 flex-1 rounded-[32px] bg-white p-5 shadow-[0_2px_16px_rgba(0,0,0,0.06)]">
        <div className="relative h-full w-full overflow-hidden">
          <MapCanvas />
          <MapControls />
        </div>
      </div>
    </div>
  );
}

export default function App() {
  return (
    <div className="relative flex h-[1564px] w-[2706px] flex-col overflow-hidden bg-[linear-gradient(#ffffff_1500px,#efefef_1564px)] [font-family:Inter,sans-serif]">
      <BrowserBar />
      <div className="-ml-[66px] flex w-[2738px] flex-col">
        <Logo />
        <div className="h-[236px] shrink-0 pt-[62px] text-center text-[64px] font-bold leading-[76px] tracking-[-1.5px] text-[#212529]">Crop Yield Prediction App</div>
        <div className="flex items-start gap-10">
          <MapPanel />
          <ChatPanel />
        </div>
      </div>
      {/* floating timer badge */}
      <div className="absolute left-[2662px] top-[539px] flex h-12 w-12 items-center whitespace-nowrap rounded-full bg-[#5aa7ff] pl-[9px] text-[15px] font-bold text-white shadow-[0_0_24px_rgba(90,120,255,0.18)]">44M</div>
    </div>
  );
}
